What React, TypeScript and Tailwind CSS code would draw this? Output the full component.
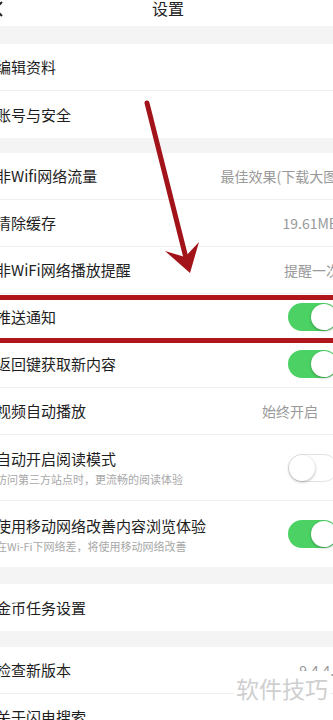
import React from 'react';

// Settings list; the screenshot is cropped a few px on each side, so the page is a bit wider than the window
type Row =
  | { kind: 'gap'; h: string }
  | { kind: 'item'; title: string; sub?: string; value?: string; valueClass?: string; toggle?: boolean; last?: boolean };

const rows: Row[] = [
  { kind: 'gap', h: 'h-[18px]' },
  { kind: 'item', title: '编辑资料' },
  { kind: 'item', title: '账号与安全', last: true },
  { kind: 'gap', h: 'h-[15px]' },
  { kind: 'item', title: '非Wifi网络流量', value: '最佳效果(下载大图)', valueClass: 'mr-[-4px]' },
  { kind: 'item', title: '清除缓存', value: '19.61MB', valueClass: 'mr-[0px]' },
  { kind: 'item', title: '非WiFi网络播放提醒', value: '提醒一次', valueClass: 'mr-[-2px]' },
  { kind: 'item', title: '推送通知', toggle: true },
  { kind: 'item', title: '返回键获取新内容', toggle: true },
  { kind: 'item', title: '视频自动播放', value: '始终开启', valueClass: 'mr-[20px]' },
  { kind: 'item', title: '自动开启阅读模式', sub: '访问第三方站点时，更流畅的阅读体验', toggle: false },
  { kind: 'item', title: '使用移动网络改善内容浏览体验', sub: '在Wi-Fi下网络差，将使用移动网络改善', toggle: true, last: true },
  { kind: 'gap', h: 'h-[17px]' },
  { kind: 'item', title: '金币任务设置', last: true },
  { kind: 'gap', h: 'h-[16px]' },
  { kind: 'item', title: '检查新版本', value: '9.4.4.0', valueClass: 'mr-[-4px]' },
  { kind: 'item', title: '关于闪电搜索' },
];

function Toggle({ on }: { on: boolean }) {
  if (on) {
    return (
      <div className="w-[50px] h-[28px] rounded-full bg-[#4cd264] flex items-center justify-end p-[1px] shrink-0">
        <div className="w-[26px] h-[26px] rounded-full bg-white shadow-[0_1px_3px_rgba(0,0,0,0.3)]" />
      </div>
    );
  }
  return (
    <div className="w-[50px] h-[28px] rounded-full bg-white border border-[#e3e3e3] flex items-center justify-start shrink-0">
      <div className="w-[26px] h-[26px] rounded-full bg-white shadow-[0_1px_3px_rgba(0,0,0,0.3)]" />
    </div>
  );
}

export default function App() {
  return (
    <div
      className="relative w-[333px] h-[720px] overflow-hidden bg-[#f4f4f4]"
      style={{ fontFamily: '"Noto Sans CJK SC", "Noto Sans", sans-serif' }}
    >
      <div className="w-[344px] ml-[-4px] flex flex-col">
        {/* Header */}
        <div className="h-[26px] bg-white relative flex justify-center">
          <svg className="absolute left-[-2px] top-[1px]" width="10" height="16" viewBox="0 0 10 16" fill="none">
            <polyline points="8 1 1 8 8 15" stroke="#222" strokeWidth="2" />
          </svg>
          <span className="text-[16px] leading-[18px] text-[#222] mt-[-1px]">设置</span>
        </div>

        {rows.map((r, i) => {
          if (r.kind === 'gap') return <div key={i} className={`${r.h} bg-[#f4f4f4]`} />;
          return (
            <div key={i} className="bg-white">
              <div
                className={`flex items-center justify-between pr-[2px] ${r.sub ? 'h-[66px]' : 'h-[47px]'} ${
                  r.last ? '' : 'border-b border-[#efefef]'
                }`}
              >
                <div className="flex flex-col min-w-0">
                  <span className="text-[15px] leading-[20px] text-[#1e1e1e] whitespace-nowrap">{r.title}</span>
                  {r.sub && (
                    <span className="text-[11px] leading-[14px] text-[#a8a8a8] whitespace-nowrap mt-[3px]">{r.sub}</span>
                  )}
                </div>
                {r.value && (
                  <span className={`text-[14px] text-[#999] whitespace-nowrap ${r.valueClass ?? ''}`}>{r.value}</span>
                )}
                {r.toggle !== undefined && <Toggle on={r.toggle} />}
              </div>
            </div>
          );
        })}
      </div>

      {/* red highlight box */}
      <div className="absolute left-[-10px] right-[-10px] top-[295px] h-[48px] border-y-[5px] border-[#b0151b]" />

      {/* red arrow */}
      <svg className="absolute left-0 top-0 pointer-events-none" width="333" height="720" viewBox="0 0 333 720">
        <line x1="147" y1="103" x2="186" y2="258" stroke="#a3131a" strokeWidth="5" strokeLinecap="round" />
        <path d="M190 273 L165 251 L185 257 L199 242 Z" fill="#a3131a" />
      </svg>

      {/* watermark */}
      <div className="absolute left-[234px] top-[671px] bg-white px-[2px] text-[23px] leading-[34px] text-[#cfcfcf] whitespace-nowrap">
        软件技巧
      </div>
    </div>
  );
}
